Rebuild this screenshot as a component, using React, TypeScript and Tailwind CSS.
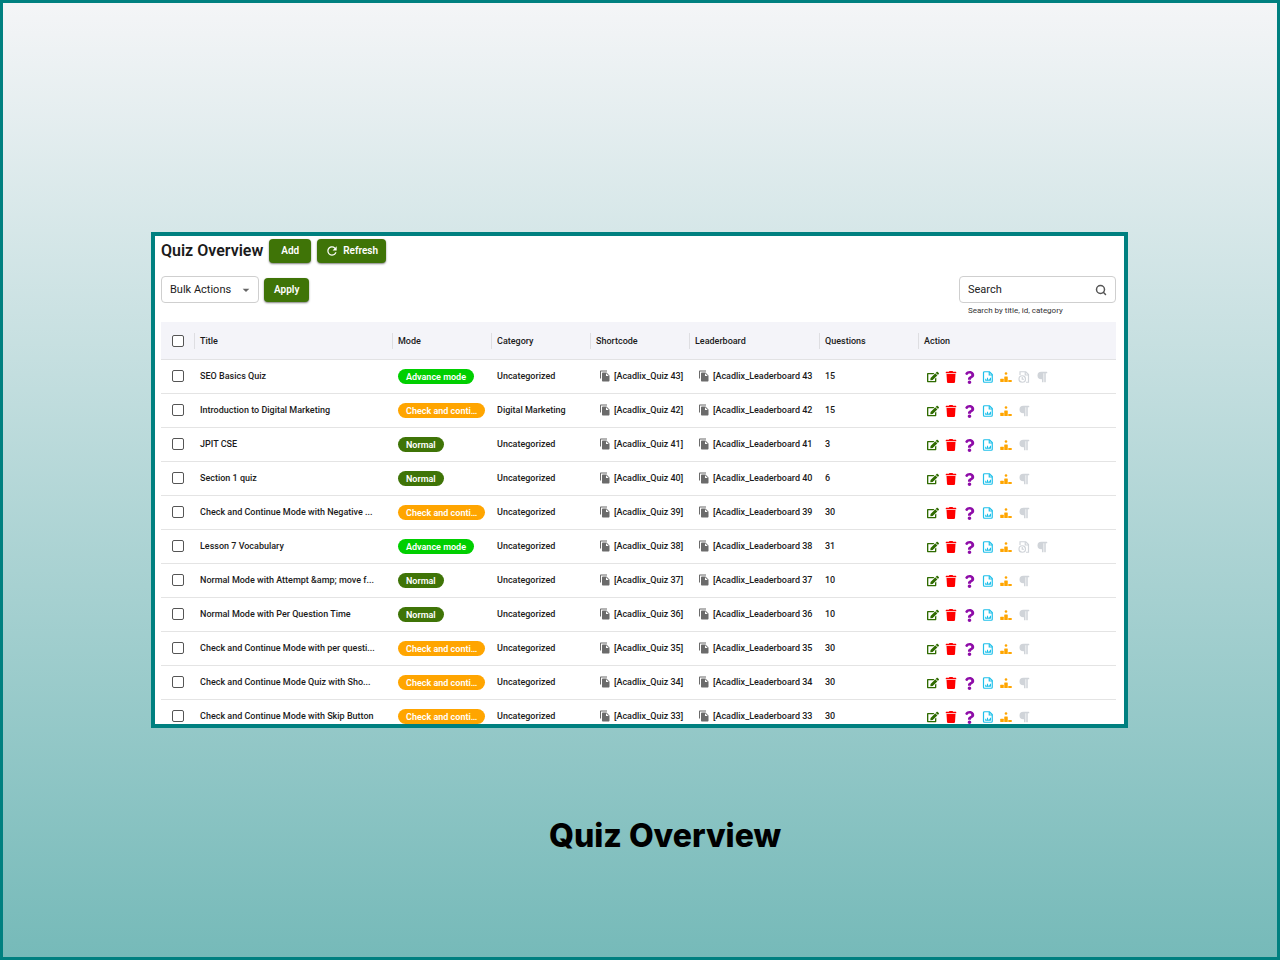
import { Search } from 'lucide-react';
import { FaEdit, FaParagraph, FaQuestion, FaTrash } from 'react-icons/fa';
import { MdArrowDropDown, MdFileCopy, MdRefresh } from 'react-icons/md';

type Mode = 'advance' | 'check' | 'normal';

type Quiz = {
  id: number;
  title: string;
  mode: Mode;
  category: string;
  questions: number;
};

const quizzes: Quiz[] = [
  { id: 43, title: 'SEO Basics Quiz', mode: 'advance', category: 'Uncategorized', questions: 15 },
  { id: 42, title: 'Introduction to Digital Marketing', mode: 'check', category: 'Digital Marketing', questions: 15 },
  { id: 41, title: 'JPIT CSE', mode: 'normal', category: 'Uncategorized', questions: 3 },
  { id: 40, title: 'Section 1 quiz', mode: 'normal', category: 'Uncategorized', questions: 6 },
  { id: 39, title: 'Check and Continue Mode with Negative ...', mode: 'check', category: 'Uncategorized', questions: 30 },
  { id: 38, title: 'Lesson 7 Vocabulary', mode: 'advance', category: 'Uncategorized', questions: 31 },
  { id: 37, title: 'Normal Mode with Attempt &amp; move f...', mode: 'normal', category: 'Uncategorized', questions: 10 },
  { id: 36, title: 'Normal Mode with Per Question Time', mode: 'normal', category: 'Uncategorized', questions: 10 },
  { id: 35, title: 'Check and Continue Mode with per questi...', mode: 'check', category: 'Uncategorized', questions: 30 },
  { id: 34, title: 'Check and Continue Mode Quiz with Sho...', mode: 'check', category: 'Uncategorized', questions: 30 },
  { id: 33, title: 'Check and Continue Mode with Skip Button', mode: 'check', category: 'Uncategorized', questions: 30 },
];

const modes = {
  advance: { label: 'Advance mode', color: 'bg-[#00cf00]' },
  check: { label: 'Check and conti…', color: 'bg-[#ffa500]' },
  normal: { label: 'Normal', color: 'bg-[#3f7407]' },
};

const columns = [
  { name: 'Title', width: 'w-[198px]' },
  { name: 'Mode', width: 'w-[99px]' },
  { name: 'Category', width: 'w-[99px]' },
  { name: 'Shortcode', width: 'w-[99px]' },
  { name: 'Leaderboard', width: 'w-[130px]' },
  { name: 'Questions', width: 'w-[99px]' },
  { name: 'Action', width: '' },
];

const ReportSVG = () => (
  <svg viewBox="0 0 24 24" className="size-3" fill="none" stroke="currentColor" strokeWidth="2.4">
    <path d="M5 1.500h10l5.500 5.500v13.500a2 2 0 0 1-2 2h-13.500a2 2 0 0 1-2-2v-17a2 2 0 0 1 2-2z" />
    <path d="M14.500 2v6h6" />
    <path d="M7.500 18.500v-3M11 18.500v-5M14.500 18.500v-3M17 18.500v-5M6.500 18.500h11" strokeWidth="2" />
  </svg>
);

const PodiumSVG = () => (
  <svg viewBox="0 0 24 24" className="size-3" fill="currentColor">
    <circle cx="12" cy="5" r="2.600" />
    <rect x="8.500" y="11" width="7" height="11" rx="1" />
    <rect x="0.500" y="15.500" width="7" height="6.500" rx="1" />
    <rect x="16.500" y="18" width="7" height="4" rx="1" />
  </svg>
);

const FileClockSVG = () => (
  <svg viewBox="0 0 24 24" className="size-3" fill="none" stroke="currentColor" strokeWidth="2.4">
    <path d="M4 8V1.500h11.500l5.500 5.500v15.500h-5" />
    <path d="M14.500 2v6h6" />
    <circle cx="8.500" cy="16" r="6.500" />
    <path d="M8.500 12v4.500h3.500" />
  </svg>
);

const Checkbox = ({ label }: { label: string }) => (
  <input
    type="checkbox"
    aria-label={label}
    className="mx-auto block size-3 appearance-none rounded-[2px] border border-[#555] bg-white checked:bg-[#3f7407]"
  />
);

const Shortcode = ({ text }: { text: string }) => (
  <div className="flex items-center gap-[3px] overflow-hidden whitespace-nowrap pl-[3px]">
    <button type="button" aria-label={`Copy ${text}`} className="shrink-0 text-[#6b6b6b]">
      <MdFileCopy className="size-3" />
    </button>
    <span>{text}</span>
  </div>
);

const Actions = ({ quiz }: { quiz: Quiz }) => (
  <div className="flex items-center gap-1.5 pl-[3px] pt-0.5">
    <button type="button" aria-label="Edit" className="text-[#2f6b00]">
      <FaEdit className="size-3" />
    </button>
    <button type="button" aria-label="Delete" className="text-[#ff0000]">
      <FaTrash className="size-3" />
    </button>
    <button type="button" aria-label="Questions" className="text-[#8e0ca8]">
      <FaQuestion className="size-[13px]" />
    </button>
    <button type="button" aria-label="Report" className="text-[#1fc0ea]">
      <ReportSVG />
    </button>
    <button type="button" aria-label="Leaderboard" className="text-[#ffa500]">
      <PodiumSVG />
    </button>
    {quiz.mode === 'advance' && (
      <button type="button" aria-label="History" className="text-[#d0d4d9]">
        <FileClockSVG />
      </button>
    )}
    <button type="button" aria-label="Paragraph" className="text-[#d0d4d9]">
      <FaParagraph className="size-3" />
    </button>
  </div>
);

const greenButton =
  'flex h-6 items-center rounded bg-[#3f7407] pb-px text-[10px] font-semibold text-white shadow-[0_1px_2px_rgba(0,0,0,0.5)]';

const Toolbar = () => (
  <div className="flex items-start justify-between">
    <div className="flex items-center gap-[5px]">
      <div className="grid h-[27px] w-[98px] items-center rounded border border-[#cfcfcf]">
        <select
          aria-label="Bulk Actions"
          className="col-start-1 row-start-1 h-full appearance-none bg-transparent pt-px pl-2 text-[11px] outline-none"
        >
          <option>Bulk Actions</option>
        </select>
        <MdArrowDropDown className="pointer-events-none col-start-1 row-start-1 mr-1 size-4 justify-self-end text-[#666]" />
      </div>
      <button type="button" className={`${greenButton} px-2.5`}>
        Apply
      </button>
    </div>
    <div className="w-[157px]">
      <div className="flex h-[27px] items-center rounded border border-[#cfcfcf] px-2">
        <input
          id="search"
          type="text"
          aria-label="Search"
          placeholder="Search"
          className="min-w-0 flex-1 pt-px text-[11px] outline-none placeholder:text-[#222]"
        />
        <Search className="size-3 text-[#555]" strokeWidth={3} />
      </div>
      <label htmlFor="search" className="mt-0.5 block pl-[9px] text-[8px] leading-3 text-[#333]">
        Search by title, id, category
      </label>
    </div>
  </div>
);

const QuizTable = () => (
  <table className="w-full table-fixed border-collapse text-left text-[9px] leading-3">
    <thead className="bg-[#f4f4f9]">
      <tr className="h-[37px] border-b border-[#e2e2e4]">
        <th className="w-[33px] pt-0.5">
          <Checkbox label="Select all" />
        </th>
        {columns.map((column) => (
          <th key={column.name} className={`${column.width} p-0 pt-px font-medium`}>
            <div className="flex h-4 items-center border-l border-[#dedee2] pl-[5px]">{column.name}</div>
          </th>
        ))}
      </tr>
    </thead>
    <tbody className="font-medium">
      {quizzes.map((quiz) => (
        <tr key={quiz.id} className="h-[34px] border-b border-[#e4e4e4]">
          <td>
            <Checkbox label={`Select ${quiz.title}`} />
          </td>
          <td className="overflow-hidden whitespace-nowrap pl-1.5">{quiz.title}</td>
          <td className="pt-px pl-1.5">
            <span
              className={`flex h-[15px] w-fit items-center whitespace-nowrap rounded-full px-2 text-[9px] font-semibold text-white ${modes[quiz.mode].color}`}
            >
              {modes[quiz.mode].label}
            </span>
          </td>
          <td className="whitespace-nowrap pl-1.5">{quiz.category}</td>
          <td className="pl-1.5">
            <Shortcode text={`[Acadlix_Quiz ${quiz.id}]`} />
          </td>
          <td className="pl-1.5">
            <Shortcode text={`[Acadlix_Leaderboard ${quiz.id}`} />
          </td>
          <td className="pl-1.5">{quiz.questions}</td>
          <td className="pl-1.5">
            <Actions quiz={quiz} />
          </td>
        </tr>
      ))}
    </tbody>
  </table>
);

const App = () => {
  return (
    <main className="flex min-h-screen flex-col border-3 border-[#008080] bg-[linear-gradient(180deg,#f4f5f7,#76bab9)] pt-[229px] pr-[149px] pb-10 pl-[148px]">
      <section className="max-h-[496px] overflow-hidden border-4 border-[#008080] bg-white pr-2 pl-1.5 font-[Roboto,sans-serif] text-[#1b1b1b]">
        <div className="mt-[3px] mb-[13px] flex items-center gap-1.5">
          <h1 className="text-[16px] leading-6 font-semibold">Quiz Overview</h1>
          <button type="button" className={`${greenButton} px-3`}>
            Add
          </button>
          <button type="button" className={`${greenButton} gap-1 px-2`}>
            <MdRefresh className="size-3.5" />
            Refresh
          </button>
        </div>
        <Toolbar />
        <div className="mt-[5px]">
          <QuizTable />
        </div>
      </section>
      <h2 className="mt-[88px] pl-[51px] text-center font-[Inter,sans-serif] text-[32px] leading-10 font-extrabold text-black">
        Quiz Overview
      </h2>
    </main>
  );
};

export default App;
